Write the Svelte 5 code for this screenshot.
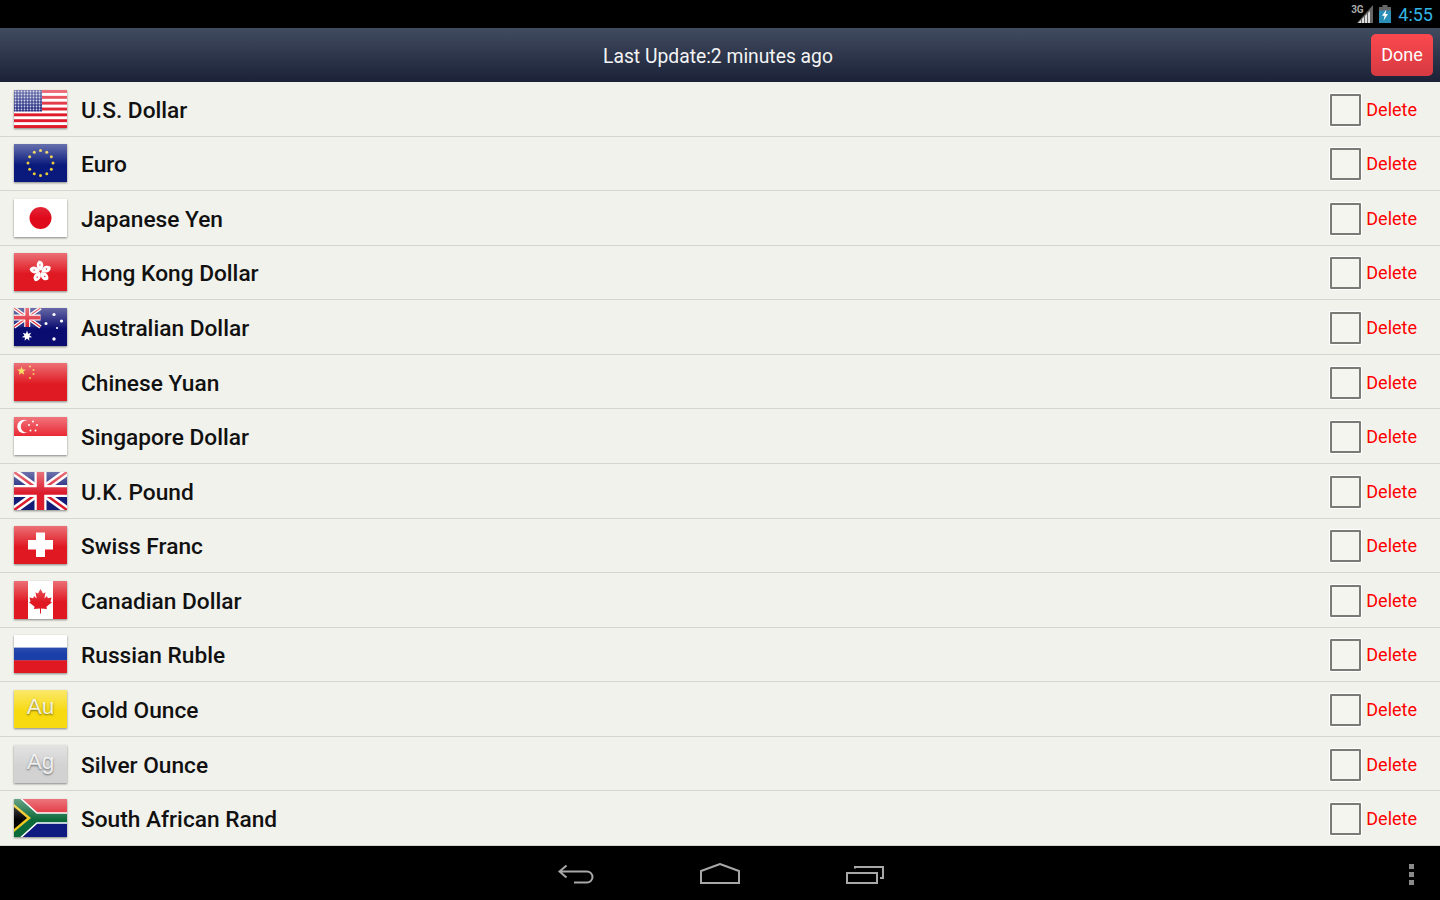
<script lang="ts">
  const currencies = [
    { code: 'us', name: 'U.S. Dollar' },
    { code: 'eu', name: 'Euro' },
    { code: 'jp', name: 'Japanese Yen' },
    { code: 'hk', name: 'Hong Kong Dollar' },
    { code: 'au', name: 'Australian Dollar' },
    { code: 'cn', name: 'Chinese Yuan' },
    { code: 'sg', name: 'Singapore Dollar' },
    { code: 'gb', name: 'U.K. Pound' },
    { code: 'ch', name: 'Swiss Franc' },
    { code: 'ca', name: 'Canadian Dollar' },
    { code: 'ru', name: 'Russian Ruble' },
    { code: 'xau', name: 'Gold Ounce' },
    { code: 'xag', name: 'Silver Ounce' },
    { code: 'za', name: 'South African Rand' }
  ]

  const euStars = Array.from({ length: 12 }, (_, i) => {
    const a = (i * Math.PI) / 6
    return { x: 26.5 + 12.5 * Math.sin(a), y: 19 - 12.5 * Math.cos(a) }
  })

  const usStripes = [0, 2, 4, 6, 8, 10, 12]
  const petals = [0, 72, 144, 216, 288]

  function star(cx: number, cy: number, r: number, points: number, inner: number) {
    const pts = []
    for (let i = 0; i < points * 2; i++) {
      const rad = i % 2 ? r * inner : r
      const a = (i * Math.PI) / points
      pts.push(`${(cx + rad * Math.sin(a)).toFixed(2)},${(cy - rad * Math.cos(a)).toFixed(2)}`)
    }
    return pts.join(' ')
  }
</script>

{#snippet union()}
  <rect width="53" height="38" fill="#141c78" />
  <path d="M0 0L53 38M53 0L0 38" stroke="#fff" stroke-width="7.5" />
  <path d="M0 0L53 38M53 0L0 38" stroke="#dc1c2c" stroke-width="2.6" />
  <path d="M26.5 0V38M0 19H53" stroke="#fff" stroke-width="12" />
  <path d="M26.5 0V38M0 19H53" stroke="#dc1c2c" stroke-width="7.5" />
{/snippet}

{#snippet flagArt(code: string)}
  <svg class="art" viewBox="0 0 53 38" preserveAspectRatio="none" aria-hidden="true">
    {#if code === 'us'}
      <rect width="53" height="38" fill="#fff" />
      {#each usStripes as s}
        <rect y={s * 2.923} width="53" height="2.923" fill="#e01b2b" />
      {/each}
      <defs>
        <pattern id="usdots" width="3" height="3" patternUnits="userSpaceOnUse">
          <rect width="3" height="3" fill="#222a80" />
          <circle cx="1.5" cy="1.5" r="0.9" fill="#c9cbe4" />
        </pattern>
      </defs>
      <rect width="28" height="21.5" fill="url(#usdots)" />
    {:else if code === 'eu'}
      <rect width="53" height="38" fill="#0a1a7c" />
      {#each euStars as s}
        <circle cx={s.x} cy={s.y} r="1.5" fill="#e8c93a" />
      {/each}
    {:else if code === 'jp'}
      <rect width="53" height="38" fill="#fff" />
      <circle cx="26.5" cy="19" r="11" fill="#df0a1c" />
    {:else if code === 'hk'}
      <rect width="53" height="38" fill="#e01822" />
      <g transform="translate(26.5 18.5)">
        {#each petals as p}
          <g transform="rotate({p})">
            <path d="M0 -1C-4.5 -3 -5 -8 -1.5 -11C3.5 -10.5 4 -5 0.8 -1.2Z" fill="#fff" />
            <circle cx="-0.6" cy="-6.5" r="0.7" fill="#e01822" />
          </g>
        {/each}
      </g>
    {:else if code === 'au'}
      <rect width="53" height="38" fill="#0a0c70" />
      <g transform="scale(0.5)">{@render union()}</g>
      <polygon points={star(13, 28, 5.4, 7, 0.48)} fill="#fff" />
      <circle cx="40" cy="6.5" r="1.6" fill="#fff" />
      <circle cx="32" cy="15.5" r="1.5" fill="#fff" />
      <circle cx="47.5" cy="13" r="1.6" fill="#fff" />
      <circle cx="43" cy="20" r="1.1" fill="#fff" />
      <circle cx="40" cy="31" r="1.7" fill="#fff" />
    {:else if code === 'cn'}
      <rect width="53" height="38" fill="#e01a22" />
      <polygon points={star(7.5, 8, 4.6, 5, 0.42)} fill="#f6d53a" />
      <circle cx="16" cy="3.5" r="1.1" fill="#f0b83a" />
      <circle cx="19.5" cy="7" r="1.1" fill="#f0b83a" />
      <circle cx="19.5" cy="11" r="1.1" fill="#f0b83a" />
      <circle cx="16" cy="15" r="1.1" fill="#f0b83a" />
    {:else if code === 'sg'}
      <rect width="53" height="38" fill="#fff" />
      <rect width="53" height="19" fill="#e8202c" />
      <circle cx="10" cy="9.5" r="6.8" fill="#fff" />
      <circle cx="13" cy="9.5" r="6.2" fill="#e8202c" />
      <circle cx="19" cy="4.5" r="1" fill="#fff" />
      <circle cx="23" cy="8" r="1" fill="#fff" />
      <circle cx="15" cy="8" r="1" fill="#fff" />
      <circle cx="16.5" cy="13.5" r="1" fill="#fff" />
      <circle cx="21.5" cy="13.5" r="1" fill="#fff" />
    {:else if code === 'gb'}
      {@render union()}
    {:else if code === 'ch'}
      <path d="M0 0H53V38H0Z" fill="#e01822" />
      <path d="M22 6.5H31V14H39V23.5H31V31H22V23.5H14V14H22Z" fill="#fff" />
    {:else if code === 'ca'}
      <rect width="53" height="38" fill="#e01822" />
      <rect x="14" width="25" height="38" fill="#fff" />
      <path d="M26.5 8L29 12.5L31.5 11.2L30.4 17.5L33 15L33.8 17.2L37.6 16.4L36.4 20.4L38 21.2L32.4 25.8L33 28L27 27.4V32.5H26V27.4L20 28L20.6 25.8L15 21.2L16.6 20.4L15.4 16.4L19.2 17.2L20 15L22.6 17.5L21.5 11.2L24 12.5Z" fill="#e01822" />
    {:else if code === 'ru'}
      <rect width="53" height="13" fill="#fff" />
      <rect y="12.6" width="53" height="13" fill="#1a3fa8" />
      <rect y="25.3" width="53" height="12.7" fill="#e01822" />
    {:else if code === 'za'}
      <rect width="53" height="19" fill="#e0202c" />
      <rect y="19" width="53" height="19" fill="#0f1a80" />
      <path d="M0 0L21 19L0 38M21 19H53" fill="none" stroke="#fff" stroke-width="11.5" />
      <path d="M0 0L21 19L0 38M21 19H53" fill="none" stroke="#0c6a3a" stroke-width="8.5" />
      <path d="M0 5L17 19L0 33Z" fill="#f0c820" />
      <path d="M0 8L13 19L0 30Z" fill="#000" />
    {/if}
  </svg>
{/snippet}

<div class="screen">
  <div class="status">
    <span class="net">3G</span>
    <svg class="signal" viewBox="0 0 16 18" aria-hidden="true">
      <path d="M16 0V18H0Z" fill="#666" />
      <path d="M1 18L4 15V18ZM5 18V14L7 12V18ZM8 18V11L10 9V18ZM11 18V8L13 6V18Z" fill="#ddd" />
    </svg>
    <svg class="battery" viewBox="0 0 12 18" aria-hidden="true">
      <path d="M3.5 0H8.5V2H12V18H0V2H3.5Z" fill="#666" />
      <path d="M0 5.5H12V18H0Z" fill="#2a8fb8" />
      <path d="M7.4 4.5L3 10.8H5.6L4.6 15.5L9 9H6.4Z" fill="#fff" />
    </svg>
    <span class="clock">4:55</span>
  </div>

  <header class="topbar">
    <span class="updated">Last Update:2 minutes ago</span>
    <button class="done">Done</button>
  </header>

  <ul class="list">
    {#each currencies as c}
      <li class="row">
        <div class="flag {c.code}">
          {#if c.code === 'xau'}
            <span class="metal">Au</span>
          {:else if c.code === 'xag'}
            <span class="metal">Ag</span>
          {:else}
            {@render flagArt(c.code)}
          {/if}
        </div>
        <span class="name">{c.name}</span>
        <span class="check"></span>
        <span class="delete">Delete</span>
      </li>
    {/each}
  </ul>

  <nav class="navbar">
    <div class="navkeys">
      <svg class="key back" viewBox="0 0 36 20" aria-hidden="true">
        <path d="M8.5 1.5L1.5 7.5L8.5 13.5M2 7.5H29A5.2 5.2 0 0 1 29 18.5H16" fill="none" stroke="#a8a8a8" stroke-width="2" />
      </svg>
      <svg class="key home" viewBox="0 0 40 21" aria-hidden="true">
        <path d="M1 20V8L20 1L39 8V20Z" fill="none" stroke="#a8a8a8" stroke-width="2" />
      </svg>
      <svg class="key recents" viewBox="0 0 38 19" aria-hidden="true">
        <path d="M1 8H31V18H1Z" fill="none" stroke="#a8a8a8" stroke-width="2" />
        <path d="M9 3.5V2H37V13H34" fill="none" stroke="#a8a8a8" stroke-width="2" />
      </svg>
    </div>
    <div class="menu"><i></i><i></i><i></i></div>
  </nav>
</div>

<style>
  :global(body) {
    margin: 0;
    background: #000;
  }

  .screen {
    display: flex;
    flex-direction: column;
    width: 1440px;
    height: 900px;
    overflow: hidden;
    font-family: Roboto, 'Liberation Sans', sans-serif;
  }

  .status {
    display: flex;
    align-items: center;
    justify-content: flex-end;
    height: 28px;
    padding-right: 7px;
    background: #000;
  }

  .net {
    align-self: flex-start;
    margin-top: 4px;
    font-size: 10px;
    font-weight: 700;
    line-height: 11px;
    color: #aaa;
    letter-spacing: -0.3px;
  }

  .signal {
    align-self: flex-start;
    width: 16px;
    height: 18px;
    margin: 5px 6px 0 -6px;
  }

  .battery {
    align-self: flex-start;
    width: 12px;
    height: 18px;
    margin: 5px 7px 0 0;
  }

  .clock {
    margin-top: 1px;
    font-size: 18px;
    color: #33b5e5;
  }

  .topbar {
    display: flex;
    align-items: center;
    flex: none;
    height: 54px;
    padding-right: 7px;
    background: linear-gradient(#414b60, #1b2238);
  }

  .updated {
    flex: 1;
    margin-top: 2px;
    padding-left: 65px;
    text-align: center;
    font-size: 19.3px;
    color: #f4f4f4;
  }

  .done {
    width: 62px;
    height: 42px;
    padding: 0 0 2px;
    border: none;
    border-radius: 5px;
    background: linear-gradient(#fb484e, #d63a42);
    color: #fff;
    font-family: inherit;
    font-size: 18px;
  }

  .list {
    display: grid;
    grid-auto-rows: 1fr;
    flex: none;
    height: 764px;
    margin: 0;
    padding: 0;
    list-style: none;
    background: #f2f2ec;
  }

  .row {
    display: flex;
    align-items: center;
    box-sizing: border-box;
    padding: 0 23px 0 14px;
    border-bottom: 1px solid #d6d6d0;
  }

  .flag {
    position: relative;
    flex: none;
    display: flex;
    align-items: center;
    justify-content: center;
    width: 53px;
    height: 38px;
    box-shadow: 0 1px 2px rgba(0, 0, 0, 0.45);
  }

  .flag::after {
    content: '';
    position: absolute;
    inset: 0;
    background: linear-gradient(rgba(255, 255, 255, 0.38), rgba(255, 255, 255, 0.04) 50%, rgba(255, 255, 255, 0) 55%);
  }

  .flag.jp::after,
  .flag.ru::after {
    background: linear-gradient(rgba(255, 255, 255, 0.2), rgba(255, 255, 255, 0) 50%);
  }

  .art {
    display: block;
    width: 53px;
    height: 38px;
    filter: blur(0.35px);
  }

  .xau {
    background: #f7da10;
  }

  .xag {
    background: #d2d2d2;
  }

  .metal {
    margin-top: -4px;
    font-family: 'Liberation Sans', Arial, sans-serif;
    font-size: 22.5px;
    color: rgba(255, 255, 255, 0.85);
    text-shadow: 0 1px 2px rgba(0, 0, 0, 0.5);
  }

  .name {
    flex: 1;
    margin: 3px 0 0 14px;
    font-size: 22.7px;
    font-weight: 500;
    color: #111;
  }

  .check {
    flex: none;
    width: 27px;
    height: 28px;
    margin-top: 2px;
    border: 2px solid #7a7a76;
    border-radius: 1px;
    background: #f5f5ef;
    box-shadow: 0 0 0 1px #fff;
  }

  .delete {
    margin: 1px 0 0 5px;
    font-size: 18px;
    color: #f00;
  }

  .navbar {
    display: grid;
    grid-template-columns: 1fr auto 1fr;
    align-items: center;
    flex: 1;
    background: #000;
  }

  .navkeys {
    grid-column: 2;
    display: flex;
    align-items: flex-end;
    margin-top: 1px;
    padding-left: 2px;
  }

  .key {
    display: block;
  }

  .back {
    width: 36px;
    height: 20px;
  }

  .home {
    width: 40px;
    height: 21px;
    margin-left: 106px;
  }

  .recents {
    width: 38px;
    height: 19px;
    margin-left: 106px;
  }

  .menu {
    grid-column: 3;
    justify-self: end;
    display: flex;
    flex-direction: column;
    gap: 3px;
    margin-top: 2px;
    margin-right: 26px;
  }

  .menu i {
    display: block;
    width: 5px;
    height: 5px;
    background: #8a8a8a;
  }
</style>
